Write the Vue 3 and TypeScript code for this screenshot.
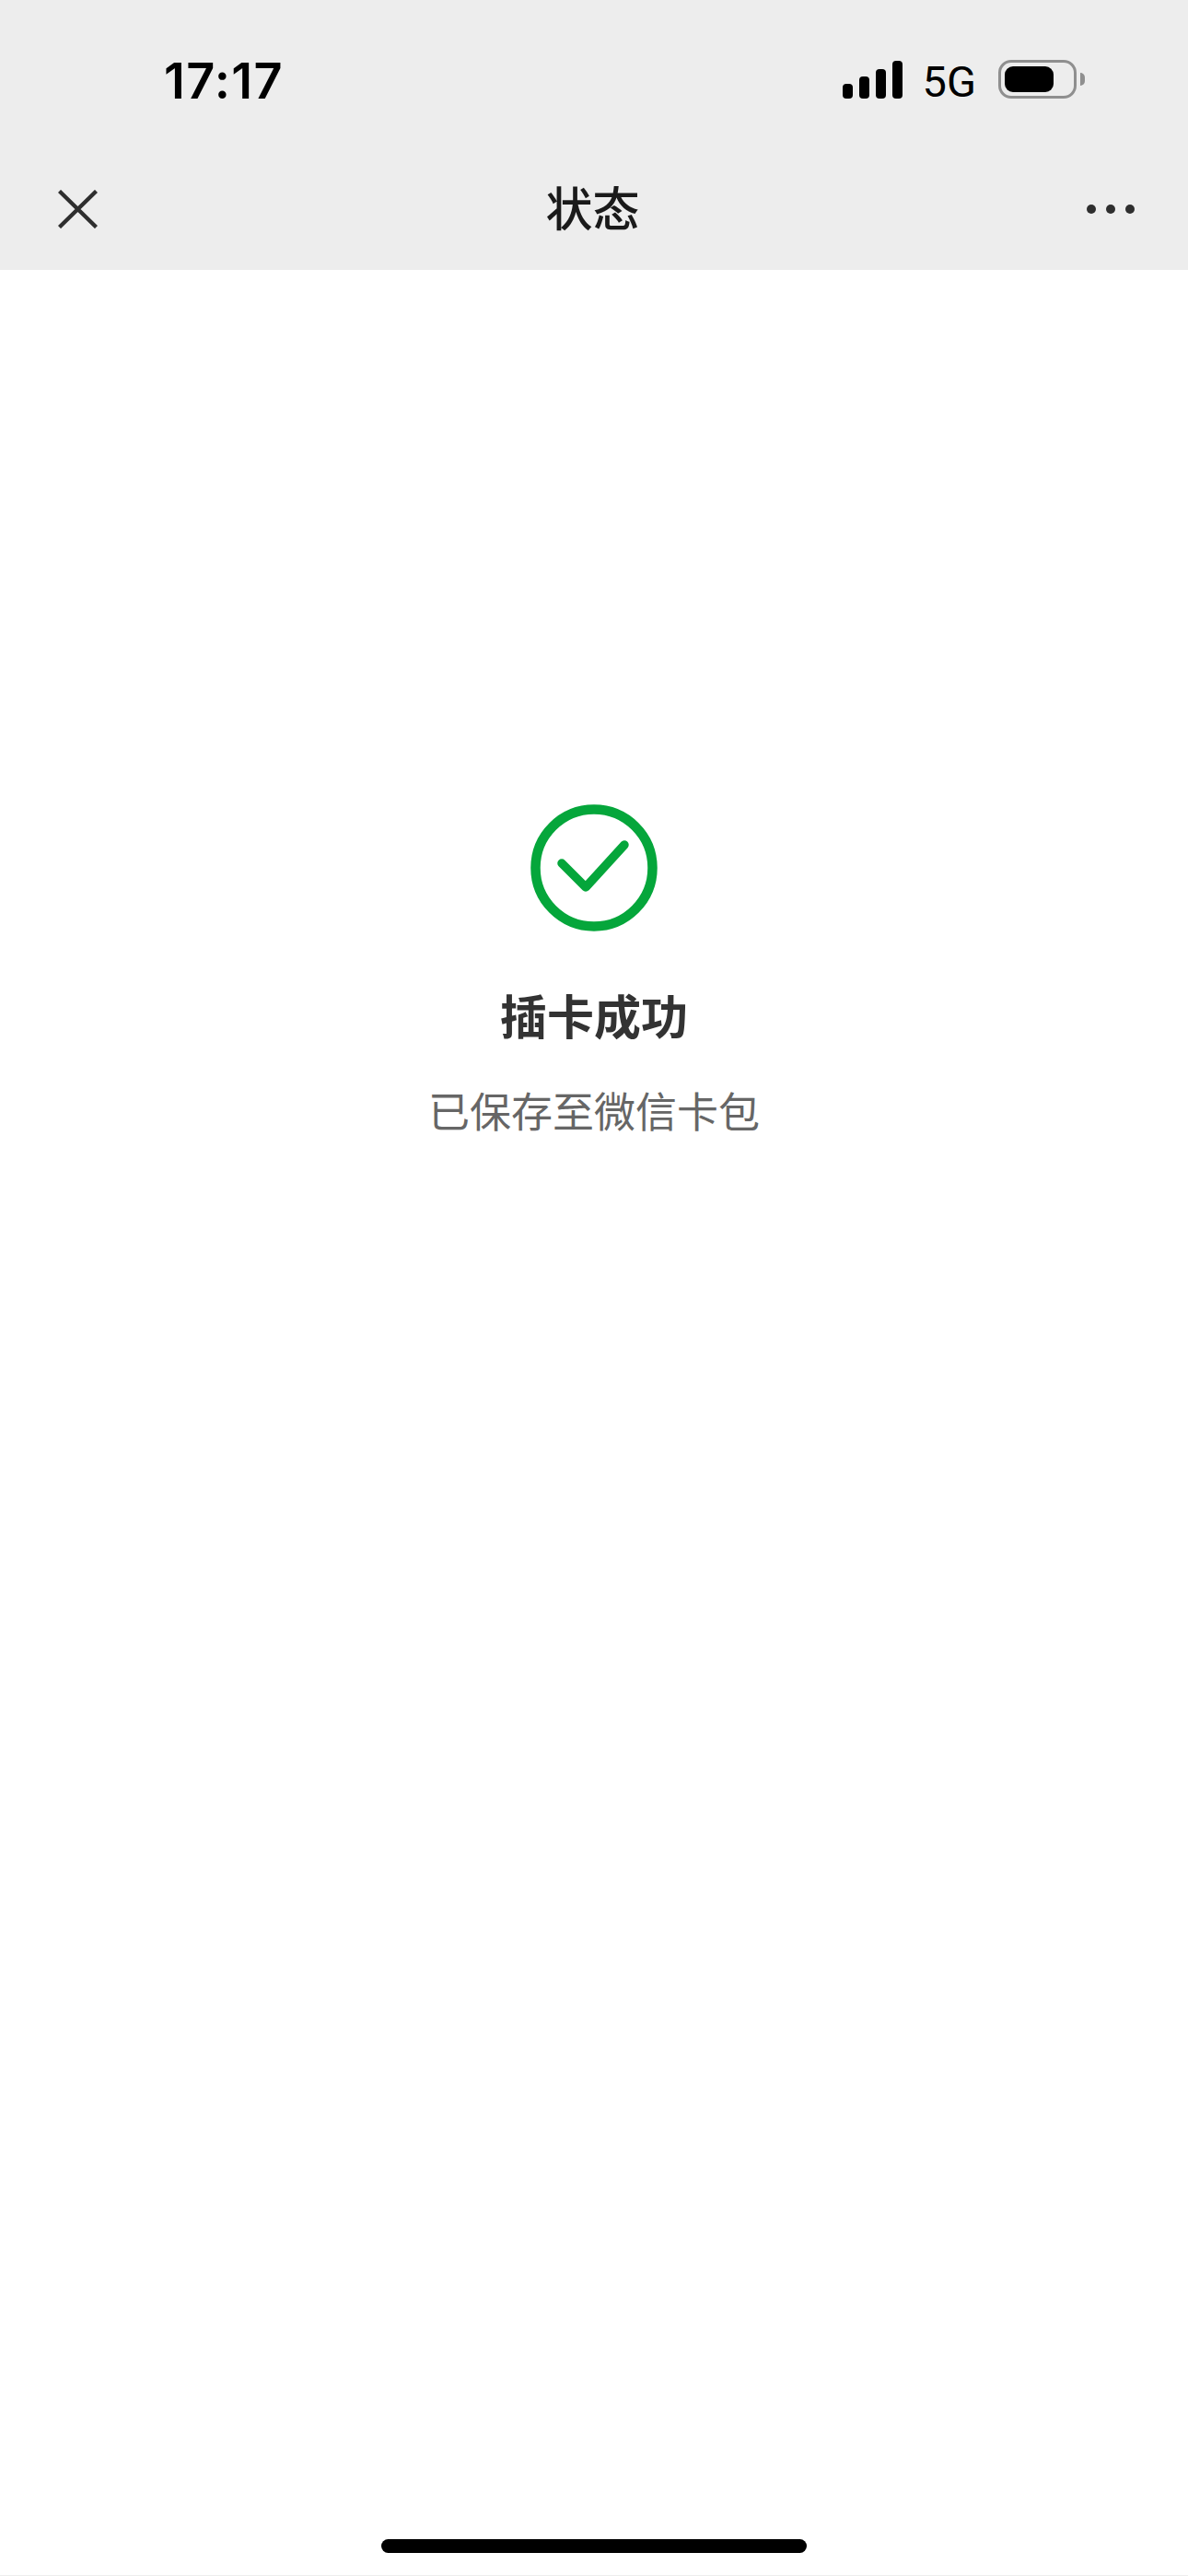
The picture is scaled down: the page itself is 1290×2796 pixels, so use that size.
<script setup lang="ts">
const signalBars = [16, 24, 32, 41]
</script>

<template>
  <div class="page">
    <header class="top">
      <div class="status">
        <span class="time">17:17</span>
        <div class="status-right">
          <div class="signal">
            <i v-for="h in signalBars" :key="h" class="bar" :style="{ height: h + 'px' }"></i>
          </div>
          <span class="net">5G</span>
          <div class="battery">
            <div class="battery-body"><div class="battery-fill"></div></div>
            <div class="battery-nub"></div>
          </div>
        </div>
      </div>
      <nav class="nav">
        <svg class="close" width="43" height="42" viewBox="0 0 43 42">
          <path d="M1.5 1.5 L41.5 40.5 M41.5 1.5 L1.5 40.5" fill="none" stroke="#2e2e2e" stroke-width="4.4" />
        </svg>
        <span class="nav-title">状态</span>
        <div class="more"><i></i><i></i><i></i></div>
      </nav>
    </header>

    <main class="content">
      <svg class="check" width="138" height="138" viewBox="0 0 138 138">
        <circle cx="69" cy="69" r="63.5" fill="none" stroke="#05a63b" stroke-width="10.5" />
        <path d="M34 64 L60 90 L102 44" fill="none" stroke="#05a63b" stroke-width="9.5" stroke-linecap="round" stroke-linejoin="round" />
      </svg>
      <h1 class="title">插卡成功</h1>
      <p class="desc">已保存至微信卡包</p>
    </main>

    <footer class="home">
      <div class="home-bar"></div>
    </footer>
  </div>
</template>

<style scoped>
.page {
  height: 2796px;
  display: flex;
  flex-direction: column;
  background: #fff;
  font-family: "Noto Sans CJK SC", "Liberation Sans", sans-serif;
  overflow: hidden;
}

.top {
  height: 293px;
  flex-shrink: 0;
  background: #ededed;
}

.status {
  height: 161px;
  display: flex;
  justify-content: space-between;
  padding: 65px 112px 0 178px;
  box-sizing: border-box;
}

.time {
  font-family: Inter, "Liberation Sans", sans-serif;
  font-size: 54px;
  font-weight: 600;
  line-height: 46px;
  letter-spacing: 1.3px;
  color: #000;
}

.status-right {
  display: flex;
  align-items: flex-start;
  height: 44px;
}

.signal {
  display: flex;
  align-items: flex-end;
  gap: 7px;
  height: 42px;
}

.bar {
  width: 11px;
  border-radius: 4px;
  background: #000;
}

.net {
  margin-left: 22px;
  font-family: Roboto, "Liberation Sans", sans-serif;
  font-size: 47px;
  line-height: 44px;
  margin-top: 2px;
  color: #000;
}

.battery {
  display: flex;
  align-items: center;
  margin-left: 24px;
}

.battery-body {
  width: 85px;
  height: 42px;
  box-sizing: border-box;
  padding: 4px;
  border: 3.5px solid #8f8f8f;
  border-radius: 14px;
}

.battery-fill {
  width: 53px;
  height: 28px;
  border-radius: 9px;
  background: #000;
}

.battery-nub {
  width: 5px;
  height: 14px;
  margin-left: 4px;
  border-radius: 0 7px 7px 0;
  background: #8f8f8f;
}

.nav {
  height: 132px;
  display: grid;
  grid-template-columns: 1fr auto 1fr;
  align-items: center;
  padding: 0 58px 0 63px;
}

.nav-title {
  margin: 0 8px 7px 0;
  font-size: 51px;
  font-weight: 500;
  line-height: 60px;
  color: #1a1a1a;
}

.more {
  display: flex;
  justify-content: flex-end;
  gap: 10.5px;
}

.more i {
  width: 10.5px;
  height: 10.5px;
  border-radius: 50%;
  background: #2e2e2e;
}

.content {
  flex: 1;
  display: flex;
  flex-direction: column;
  align-items: center;
  padding-top: 580px;
}

.check {
  display: block;
}

.title {
  margin: 55px 0 0;
  font-size: 51px;
  font-weight: 700;
  line-height: 70px;
  color: #333;
}

.desc {
  margin: 37px 0 0;
  font-size: 45px;
  font-weight: 400;
  line-height: 64px;
  color: #666;
}

.home {
  height: 39px;
  flex-shrink: 0;
  display: flex;
  justify-content: center;
  border-bottom: 1px solid #eee;
}

.home-bar {
  width: 462px;
  height: 15px;
  border-radius: 8px;
  background: #000;
}
</style>
